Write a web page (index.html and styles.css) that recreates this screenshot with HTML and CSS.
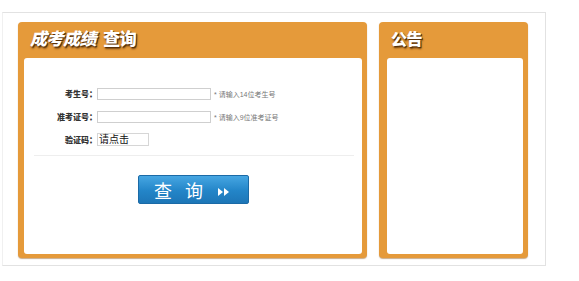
FILE: index.html
```html
<!DOCTYPE html>
<html lang="zh-CN">
<head>
    <meta charset="UTF-8">
    <meta name="viewport" content="width=device-width, initial-scale=1.0">
    <title>成考成绩查询</title>
    <link rel="stylesheet" href="styles.css">
</head>
<body>
    <div class="page">
        <div class="panel panel-query">
            <h2 class="panel-title"><em>成考成绩</em> 查询</h2>
            <div class="panel-body">
                <div class="form">
                    <div class="row">
                        <label>考生号：</label>
                        <input type="text" class="field">
                        <span class="hint">* 请输入14位考生号</span>
                    </div>
                    <div class="row">
                        <label>准考证号：</label>
                        <input type="text" class="field">
                        <span class="hint">* 请输入9位准考证号</span>
                    </div>
                    <div class="row">
                        <label>验证码：</label>
                        <span class="code">请点击</span>
                    </div>
                </div>
                <div class="divider"></div>
                <div class="actions">
                    <button class="query-btn">查&nbsp;&nbsp;询
                        <svg class="arrows" width="12" height="8" viewBox="0 0 12 8"><path d="M0 0L5 4L0 8Z M6 0L11 4L6 8Z" fill="#fff"/></svg>
                    </button>
                </div>
            </div>
        </div>

        <div class="panel panel-notice">
            <h2 class="panel-title">公告</h2>
            <div class="panel-body"></div>
        </div>
    </div>
</body>
</html>
```

FILE: styles.css
```css
* {
    margin: 0;
    padding: 0;
    box-sizing: border-box;
    font-family: "Liberation Sans", "Noto Sans CJK SC", sans-serif;
}

body {
    background: #fff;
}

.page {
    display: flex;
    gap: 12px;
    margin: 12px 0 0 2px;
    width: 544px;
    height: 254px;
    padding: 9px 0 0 15px;
    border: 1px solid #e2e2e2;
    border-left-color: #f0f0f0;
}

.panel {
    display: flex;
    flex-direction: column;
    height: 236px;
    background: #e59a3a;
    border-radius: 4px;
    padding: 0 5px 4px 6px;
    box-shadow: 0 1px 1px rgba(150, 90, 20, 0.5);
}

.panel-query {
    width: 349px;
}

.panel-notice {
    width: 149px;
    padding-left: 8px;
}

.panel-title {
    height: 36px;
    line-height: 36px;
    color: #fff;
    font-size: 17px;
    font-weight: 900;
    padding-left: 6px;
    text-shadow: 1px 1px 0 #5a3208, 1px 2px 2px #6b3d0c;
    letter-spacing: -0.5px;
}

.panel-notice .panel-title {
    padding-left: 4px;
    font-size: 16px;
}

.panel-title em {
    font-style: italic;
    margin-right: 3px;
}

.panel-body {
    flex: 1;
    background: #fff;
    border-radius: 3px;
}

.form {
    padding-top: 24px;
}

.row {
    display: flex;
    align-items: center;
    height: 23px;
}

.row label {
    width: 73px;
    text-align: right;
    font-size: 8px;
    font-weight: 900;
    color: #333;
}

.field {
    width: 114px;
    height: 12px;
    border: 1px solid #cfcfcf;
}

.hint {
    font-size: 7px;
    color: #777;
    margin-left: 3px;
}

.code {
    display: block;
    width: 52px;
    height: 13px;
    line-height: 12px;
    border: 1px solid #d6d6d6;
    font-size: 10px;
    color: #111;
    padding-left: 1px;
}

.divider {
    height: 1px;
    background: #eee;
    margin: 4px 8px 0 10px;
}

.actions {
    display: flex;
    justify-content: center;
    padding-top: 19px;
}

.query-btn {
    width: 111px;
    height: 29px;
    border: 1px solid #1b6aa6;
    border-radius: 2px;
    background: linear-gradient(#46a6e2, #2385c8 55%, #1d76b7);
    color: #fff;
    font-size: 18px;
    letter-spacing: 1px;
    padding-right: 2px;
}

.query-btn .arrows {
    margin-left: 8px;
    vertical-align: 2px;
}
```
